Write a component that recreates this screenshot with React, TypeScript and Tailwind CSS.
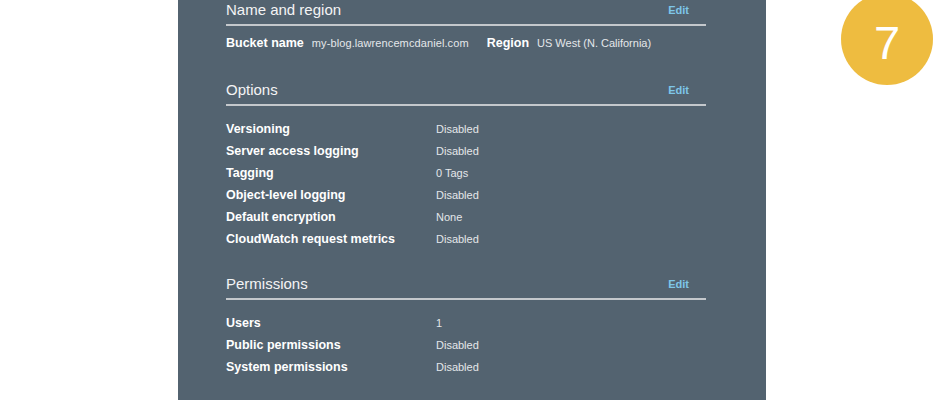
export default function App() {
  const options = [
    ['Versioning', 'Disabled'],
    ['Server access logging', 'Disabled'],
    ['Tagging', '0 Tags'],
    ['Object-level logging', 'Disabled'],
    ['Default encryption', 'None'],
    ['CloudWatch request metrics', 'Disabled'],
  ]
  const permissions = [
    ['Users', '1'],
    ['Public permissions', 'Disabled'],
    ['System permissions', 'Disabled'],
  ]

  return (
    <div className="relative w-[940px] h-[400px] bg-white overflow-hidden font-['Liberation_Sans',Arial,sans-serif]">
      <div className="ml-[178px] w-[588px] h-[400px] bg-[#536370] pl-[48px] pr-[60px]">
        {/* Name and region */}
        <SectionHeader title="Name and region" />
        <div className="mt-[6px] flex items-center h-[22px]">
          <span className="text-[12.5px] font-bold text-white">Bucket name</span>
          <span className="ml-[8px] text-[11px] tracking-[0.1px] text-[#e4e7ea]">my-blog.lawrencemcdaniel.com</span>
          <span className="ml-[18px] text-[12.5px] font-bold text-white">Region</span>
          <span className="ml-[8px] text-[11px] text-[#e4e7ea]">US West (N. California)</span>
        </div>

        {/* Options */}
        <div className="mt-[26px]">
          <SectionHeader title="Options" />
          <Rows rows={options} />
        </div>

        {/* Permissions */}
        <div className="mt-[24px]">
          <SectionHeader title="Permissions" />
          <Rows rows={permissions} />
        </div>
      </div>

      {/* step badge */}
      <div className="absolute left-[841px] top-[-7px] w-[92px] h-[92px] rounded-full bg-[#eebc40] flex items-center justify-center">
        <span className="text-[47px] leading-none text-white font-['Liberation_Sans',Arial,sans-serif] mt-[6px]">7</span>
      </div>
    </div>
  )
}

function SectionHeader({ title }: { title: string }) {
  return (
    <div className="flex items-center justify-between h-[26px] pb-[4px] border-b-2 border-[#c4c8cc] pr-[17px]">
      <span className="text-[15px] leading-[20px] text-[#f3f4f5]">{title}</span>
      <span className="text-[11px] font-bold text-[#7ec6e8]">Edit</span>
    </div>
  )
}

function Rows({ rows }: { rows: string[][] }) {
  return (
    <div className="mt-[12px]">
      {rows.map(([label, value]) => (
        <div key={label} className="flex items-center h-[22px]">
          <span className="w-[210px] text-[12.5px] font-bold text-white">{label}</span>
          <span className="text-[11px] text-[#e4e7ea]">{value}</span>
        </div>
      ))}
    </div>
  )
}
